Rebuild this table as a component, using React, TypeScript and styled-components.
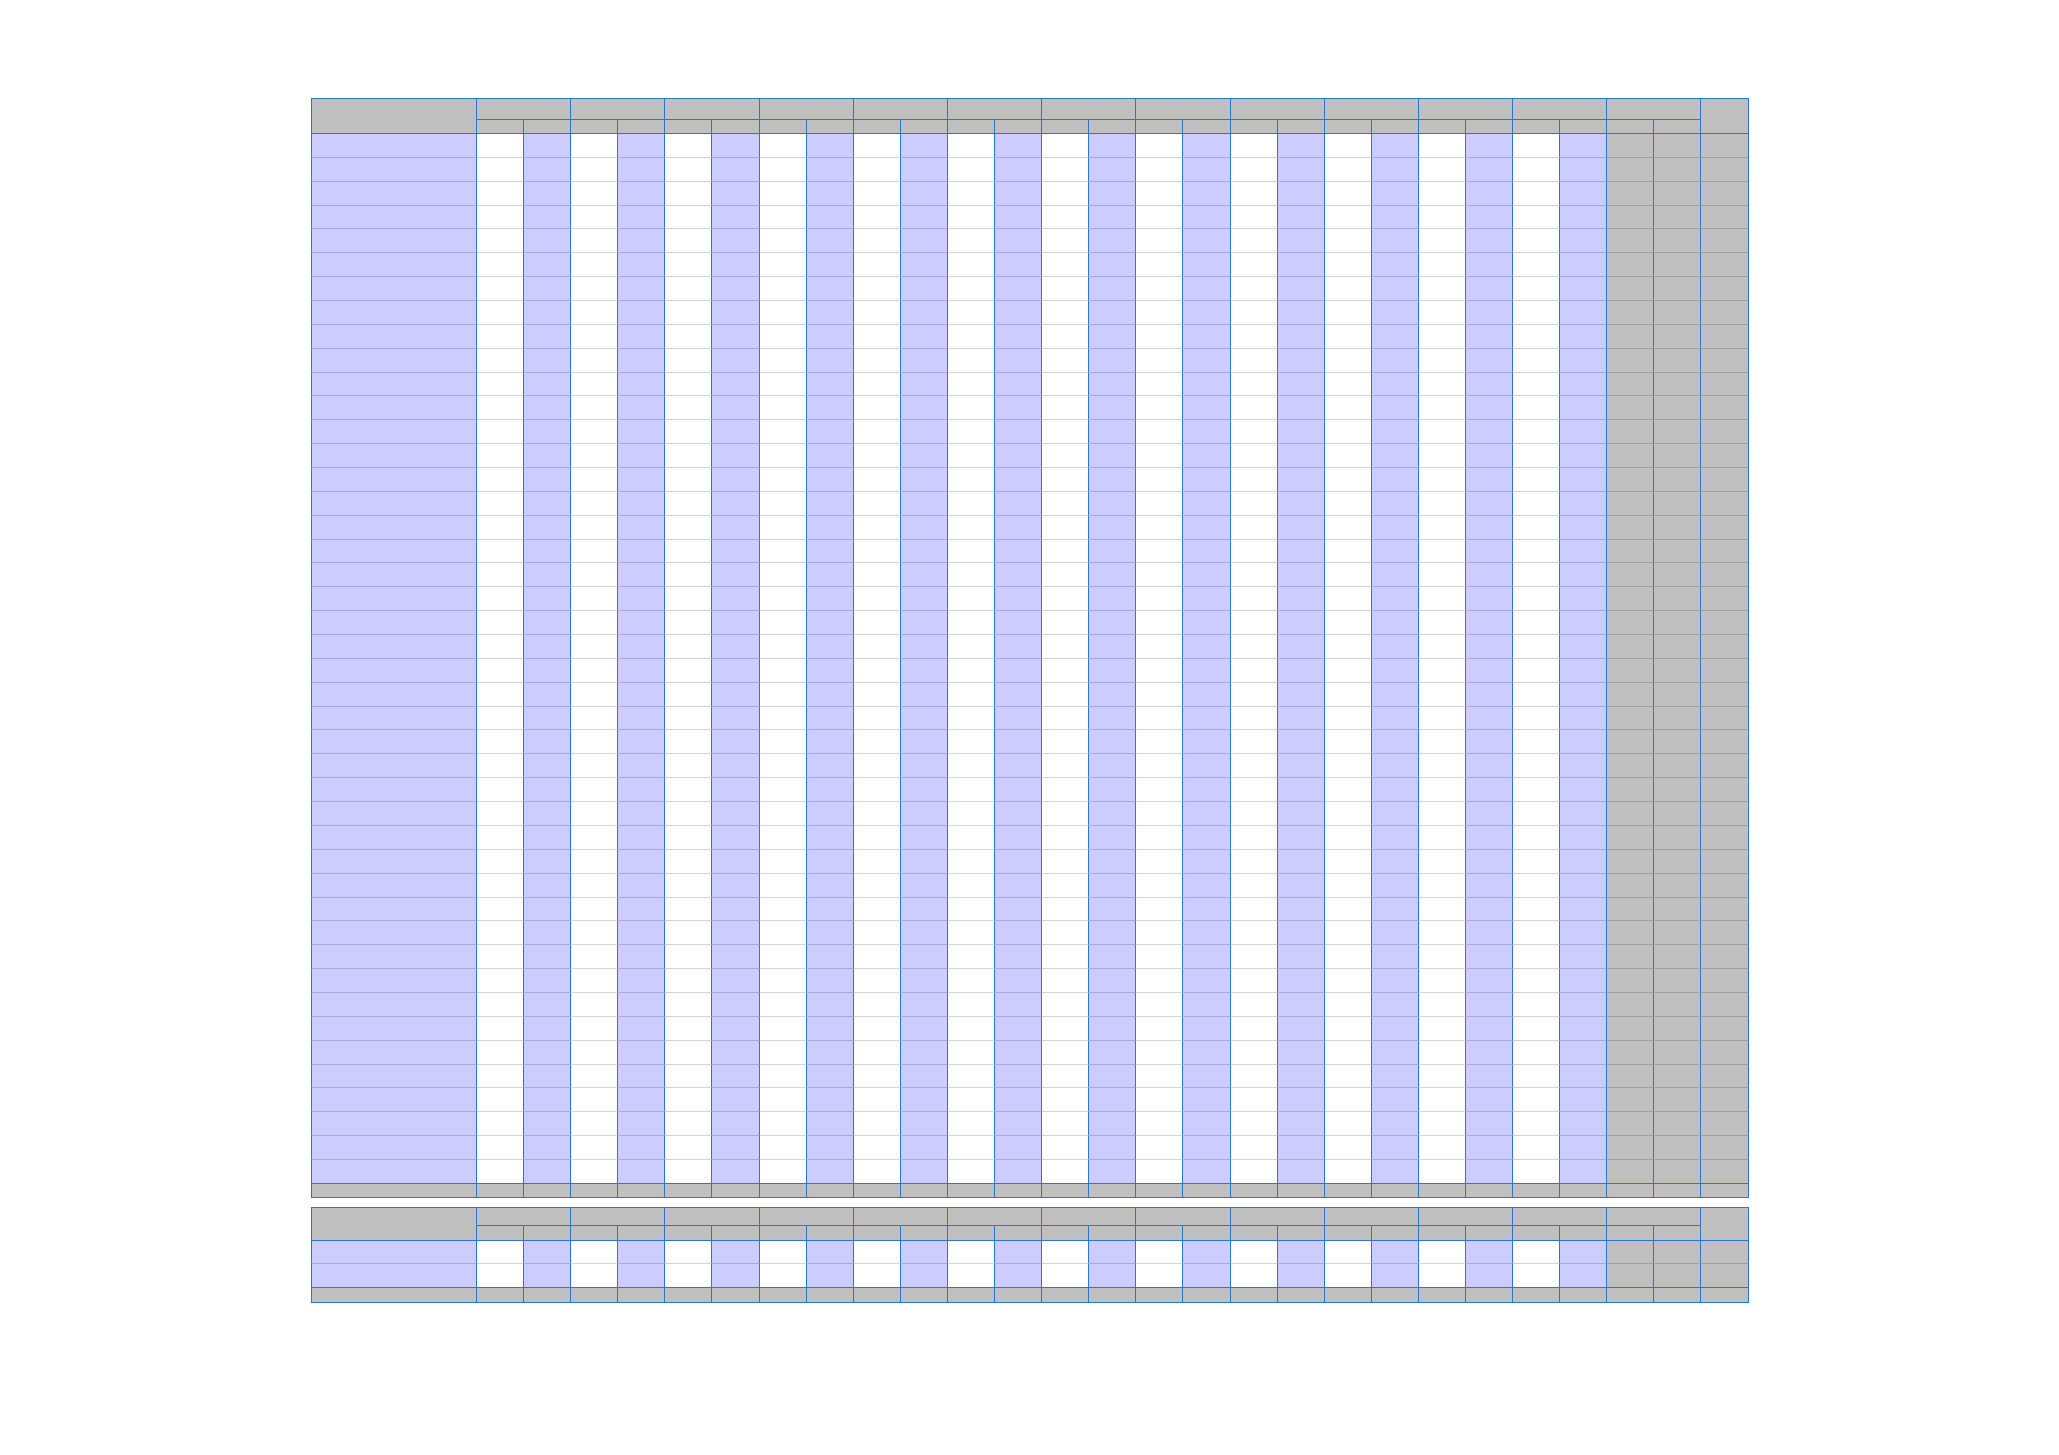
import React from 'react';
import styled, { createGlobalStyle } from 'styled-components';

type Tone = 'white' | 'lavender' | 'gray';

const BLUE = '#2877d2';
const tones: Record<Tone, string> = {
  white: '#ffffff',
  lavender: '#ccccff',
  gray: '#c0c0c0',
};

// 13 groups of two sub columns, last group is greyed out, then one summary column
const GROUPS = 13;
const subTones: Tone[] = [];
for (let g = 0; g < GROUPS; g++) {
  if (g < GROUPS - 1) subTones.push('white', 'lavender');
  else subTones.push('gray', 'gray');
}
subTones.push('gray');

const GlobalStyle = createGlobalStyle`
  html, body {
    margin: 0;
    padding: 0;
    background: #ffffff;
    font-family: "Liberation Sans", Arial, sans-serif;
  }
`;

const Page = styled.div`
  display: flex;
  flex-direction: column;
  align-items: flex-start;
  gap: 9px;
  padding: 98px 0 0 311px;
`;

const Sheet = styled.table`
  border-collapse: separate;
  border-spacing: 0;
  table-layout: fixed;
  width: 1437.7px;
  border-top: 1px solid ${BLUE};
`;

const Row = styled.tr<{ $h: number }>`
  height: ${(p) => p.$h}px;
`;

const Cell = styled.td<{ $tone: Tone; $soft?: boolean; $first?: boolean }>`
  padding: 0;
  font-size: 0;
  line-height: 0;
  background: ${(p) => tones[p.$tone]};
  border-right: 1px solid ${BLUE};
  border-bottom: 1px solid ${(p) => (p.$soft ? 'rgba(0, 0, 0, 0.17)' : BLUE)};
  border-left: ${(p) => (p.$first ? `1px solid ${BLUE}` : 'none')};
`;

const HeadCell = styled(Cell).attrs({ as: 'th' })``;

type SheetProps = {
  rows: number;
  head: [number, number];
  rowHeight: number;
  footHeight: number;
};

function Grid({ rows, head, rowHeight, footHeight }: SheetProps): JSX.Element {
  return (
    <Sheet>
      <colgroup>
        <col style={{ width: 166 }} />
        {subTones.map((_, i) => (
          <col key={i} style={{ width: 47.1 }} />
        ))}
      </colgroup>
      <thead>
        <Row $h={head[0]}>
          <HeadCell $tone="gray" $first rowSpan={2} />
          {Array.from({ length: GROUPS }).map((_, g) => (
            <HeadCell key={g} $tone="gray" colSpan={2} />
          ))}
          <HeadCell $tone="gray" rowSpan={2} />
        </Row>
        <Row $h={head[1]}>
          {subTones.slice(0, GROUPS * 2).map((_, i) => (
            <HeadCell key={i} $tone="gray" />
          ))}
        </Row>
      </thead>
      <tbody>
        {Array.from({ length: rows }).map((_, r) => {
          const soft = r < rows - 1;
          return (
            <Row key={r} $h={rowHeight}>
              <Cell $tone="lavender" $first $soft={soft} />
              {subTones.map((t, i) => (
                <Cell key={i} $tone={t} $soft={soft} />
              ))}
            </Row>
          );
        })}
      </tbody>
      <tfoot>
        <Row $h={footHeight}>
          <Cell $tone="gray" $first />
          {subTones.map((_, i) => (
            <Cell key={i} $tone="gray" />
          ))}
        </Row>
      </tfoot>
    </Sheet>
  );
}

export default function App(): JSX.Element {
  return (
    <>
      <GlobalStyle />
      <Page>
        <Grid rows={44} head={[21, 14]} rowHeight={23.86} footHeight={14} />
        <Grid rows={2} head={[18, 15]} rowHeight={23.65} footHeight={14.5} />
      </Page>
    </>
  );
}
